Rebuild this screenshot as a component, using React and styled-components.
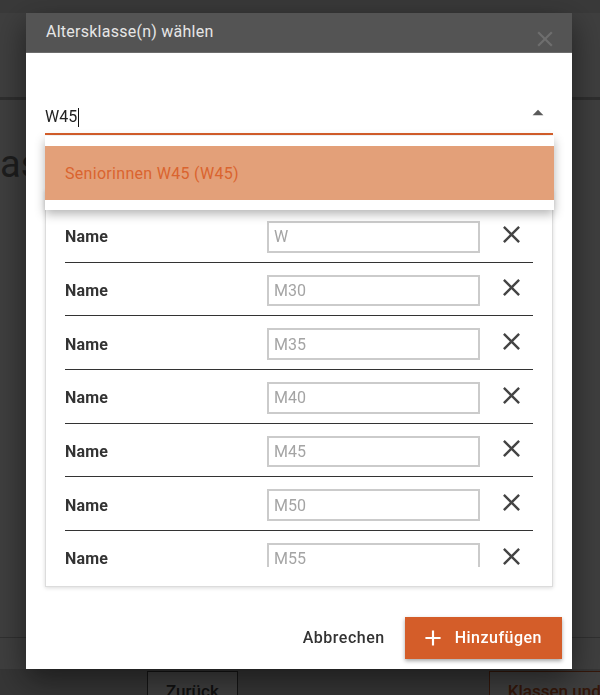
import React from 'react';
import styled, { createGlobalStyle } from 'styled-components';

const GlobalStyle = createGlobalStyle`
  html, body {
    margin: 0;
    padding: 0;
  }
  body {
    font-family: Roboto, "Liberation Sans", Arial, sans-serif;
    background: #fff;
    overflow: hidden;
  }
  * {
    box-sizing: border-box;
  }
`;

const Page = styled.div`
  height: 695px;
  display: flex;
  flex-direction: column;
  background: #fff;
  overflow: hidden;
`;

const AppBar = styled.header`
  height: 100px;
  background: #fff;
  border-top: 13px solid #ebebeb;
  border-bottom: 3px solid #bdbdbd;
`;

const PageTitle = styled.h1`
  margin: 45px 0 0;
  font-size: 38px;
  line-height: 1;
  font-weight: 400;
  color: #777;
  text-indent: -33px;
  white-space: nowrap;
`;

const PageFooter = styled.footer`
  margin-top: auto;
  height: 58px;
  border-top: 1px solid #c4c4c4;
  display: flex;
  flex-direction: column;
  justify-content: flex-end;
`;

const FooterBar = styled.div`
  height: 26px;
  background: #d8d8d8;
  display: flex;
  align-items: flex-start;
  padding: 2px 0 0 147px;
`;

const PageButton = styled.button`
  flex-shrink: 0;
  height: 40px;
  padding: 0 18px;
  margin-left: ${(p) => p.offset || 0}px;
  background: #fff;
  border: 1px solid ${(p) => (p.accent ? '#d45d29' : '#555')};
  color: ${(p) => (p.accent ? '#d45d29' : '#444')};
  font-family: inherit;
  font-size: 17px;
  font-weight: 500;
  white-space: nowrap;
`;

const Backdrop = styled.div`
  position: fixed;
  inset: 0;
  background: rgba(0, 0, 0, 0.757);
`;

const Modal = styled.div`
  position: fixed;
  top: 13px;
  left: 26px;
  width: 546px;
  background: #fff;
  display: flex;
  flex-direction: column;
  box-shadow: 0 10px 30px rgba(0, 0, 0, 0.5);
`;

const ModalHeader = styled.div`
  height: 40px;
  background: #545454;
  border-bottom: 1px solid #6c6c6c;
  display: flex;
  align-items: center;
  padding: 0 14px 2px 20px;
`;

const ModalTitle = styled.h2`
  flex: 1;
  margin: 0;
  font-size: 16px;
  font-weight: 400;
  letter-spacing: 0.25px;
  color: #e6e6e6;
`;

const HeaderClose = styled.button`
  align-self: flex-end;
  margin-bottom: -2px;
  width: 26px;
  height: 26px;
  padding: 0;
  border: none;
  background: transparent;
  display: flex;

  svg {
    fill: #6e6e6e;
  }
`;

const ModalBody = styled.div`
  padding: 0 19px;
  display: flex;
  flex-direction: column;
`;

const Field = styled.div`
  position: relative;
  margin-top: 44px;
  height: 38px;
  border-bottom: 2px solid #d75f2b;
  display: flex;
  align-items: flex-end;
  padding-bottom: 6px;
`;

const FieldValue = styled.div`
  font-size: 16px;
  line-height: 20px;
  color: #222;
  display: flex;
  align-items: center;
`;

const Caret = styled.span`
  width: 1px;
  height: 19px;
  margin-left: 1px;
  background: #111;
`;

const FieldArrow = styled.span`
  margin-left: auto;
  margin-right: 2px;
  align-self: center;
  margin-top: 2px;
  display: flex;

  svg {
    fill: #5a5a5a;
  }
`;

const Dropdown = styled.ul`
  position: absolute;
  top: calc(100% + 3px);
  left: 0;
  right: -1px;
  z-index: 2;
  margin: 0;
  padding: 10px 0;
  list-style: none;
  background: #fff;
  box-shadow: 0 4px 10px rgba(0, 0, 0, 0.3);
`;

const Option = styled.li`
  height: 54px;
  padding: 0 20px;
  display: flex;
  align-items: center;
  font-size: 16px;
  letter-spacing: 0.3px;
  background: ${(p) => (p.active ? '#e3a079' : '#fff')};
  color: ${(p) => (p.active ? '#da642f' : '#333')};
`;

const Card = styled.div`
  margin-top: 55px;
  padding: 18px 19px 19px;
  border: 1px solid #dcdcdc;
  box-shadow: 0 1px 4px rgba(0, 0, 0, 0.15);
`;

const List = styled.div`
  height: 357.7px;
  overflow: hidden;
`;

const Row = styled.div`
  height: 53.67px;
  flex-shrink: 0;
  padding-top: 3px;
  border-bottom: 1px solid #333;
  display: flex;
  align-items: center;
`;

const RowLabel = styled.span`
  width: 202px;
  font-size: 16px;
  font-weight: 700;
  letter-spacing: 0.2px;
  color: #333;
`;

const RowInput = styled.input`
  width: 213px;
  height: 31.5px;
  padding: 0 5px;
  border: 2px solid #cbcbcb;
  border-radius: 0;
  outline: none;
  font-family: inherit;
  font-size: 16px;
  color: #333;

  &::placeholder {
    color: #a4a4a4;
  }
`;

const RemoveButton = styled.button`
  margin-left: 17px;
  margin-bottom: 5px;
  width: 29px;
  height: 29px;
  padding: 0;
  border: none;
  background: transparent;
  display: flex;

  svg {
    fill: #444;
  }
`;

const ModalFooter = styled.div`
  padding: 30px 10px 10px;
  display: flex;
  justify-content: flex-end;
  align-items: center;
`;

const TextButton = styled.button`
  margin-right: 12px;
  padding: 0 8px;
  height: 36px;
  border: none;
  background: transparent;
  font-family: inherit;
  font-size: 16px;
  font-weight: 500;
  letter-spacing: 0.5px;
  color: #333;
`;

const PrimaryButton = styled.button`
  height: 42px;
  padding: 0 20px 0 15px;
  border: none;
  background: #d45d29;
  color: #fff;
  display: flex;
  align-items: center;
  gap: 9px;
  font-family: inherit;
  font-size: 16px;
  font-weight: 500;
  letter-spacing: 0.5px;
  box-shadow: 0 2px 4px rgba(0, 0, 0, 0.35);

  svg {
    fill: #fff;
  }
`;

const CloseIcon = ({ size }) => (
  <svg width={size} height={size} viewBox="0 0 24 24">
    <path d="M19 6.41L17.59 5 12 10.59 6.41 5 5 6.41 10.59 12 5 17.59 6.41 19 12 13.41 17.59 19 19 17.59 13.41 12z" />
  </svg>
);

const ArrowUpIcon = () => (
  <svg width="26" height="26" viewBox="0 0 24 24">
    <path d="M7 14l5-5 5 5z" />
  </svg>
);

const PlusIcon = () => (
  <svg width="26" height="26" viewBox="0 0 24 24">
    <path d="M19 13h-6v6h-2v-6H5v-2h6V5h2v6h6v2z" />
  </svg>
);

const classes = ['W', 'M30', 'M35', 'M40', 'M45', 'M50', 'M55', 'M60', 'M65'];

export default function App() {
  return (
    <>
      <GlobalStyle />
      <Page>
        <AppBar />
        <PageTitle>Klassen</PageTitle>
        <PageFooter>
          <FooterBar>
            <PageButton>Zurück</PageButton>
            <PageButton accent offset={251}>
              Klassen und Altersklassen speichern
            </PageButton>
          </FooterBar>
        </PageFooter>
      </Page>
      <Backdrop />
      <Modal>
        <ModalHeader>
          <ModalTitle>Altersklasse(n) wählen</ModalTitle>
          <HeaderClose aria-label="Schließen">
            <CloseIcon size={26} />
          </HeaderClose>
        </ModalHeader>
        <ModalBody>
          <Field>
            <FieldValue>
              W45
              <Caret />
            </FieldValue>
            <FieldArrow>
              <ArrowUpIcon />
            </FieldArrow>
            <Dropdown>
              <Option active>Seniorinnen W45 (W45)</Option>
            </Dropdown>
          </Field>
          <Card>
            <List>
              {classes.map((c) => (
                <Row key={c}>
                  <RowLabel>Name</RowLabel>
                  <RowInput placeholder={c} readOnly />
                  <RemoveButton aria-label="Entfernen">
                    <CloseIcon size={29} />
                  </RemoveButton>
                </Row>
              ))}
            </List>
          </Card>
        </ModalBody>
        <ModalFooter>
          <TextButton>Abbrechen</TextButton>
          <PrimaryButton>
            <PlusIcon />
            Hinzufügen
          </PrimaryButton>
        </ModalFooter>
      </Modal>
    </>
  );
}
